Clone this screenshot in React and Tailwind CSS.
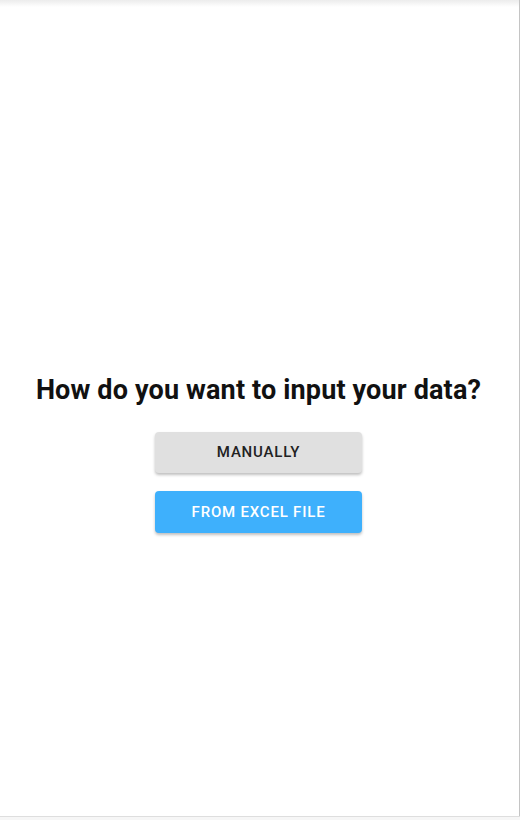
export default function App() {
  return (
    <div className="relative h-[820px] w-[520px] overflow-hidden bg-white" style={{ fontFamily: "Roboto, 'Liberation Sans', sans-serif" }}>
      <div className="absolute inset-x-0 top-0 h-[7px] bg-gradient-to-b from-[#ececec] to-white" />
      <div className="absolute right-0 top-0 h-full w-px bg-[#c4c4c4]" />
      <div className="absolute inset-x-0 bottom-[3px] h-px bg-[#dedede]" />
      <div className="absolute inset-x-0 bottom-0 h-[3px] bg-[#f6f6f6]" />

      <div className="flex w-[517px] flex-col items-center pt-[370px]">
        <h1 className="whitespace-nowrap text-[27px] font-bold leading-[40px] tracking-[0.15px] text-[#111]">
          How do you want to input your data?
        </h1>
        <button className="mt-[22px] h-[41px] w-[207px] rounded-[4px] bg-[#e0e0e0] text-[15px] font-medium tracking-[0.8px] text-[#222] shadow-[0_2px_3px_rgba(0,0,0,0.25)]">
          MANUALLY
        </button>
        <button className="mt-[18px] h-[42px] w-[207px] rounded-[4px] bg-[#3eb0fc] text-[15px] font-medium tracking-[0.8px] text-white shadow-[0_2px_3px_rgba(0,0,0,0.25)]">
          FROM EXCEL FILE
        </button>
      </div>
    </div>
  );
}
